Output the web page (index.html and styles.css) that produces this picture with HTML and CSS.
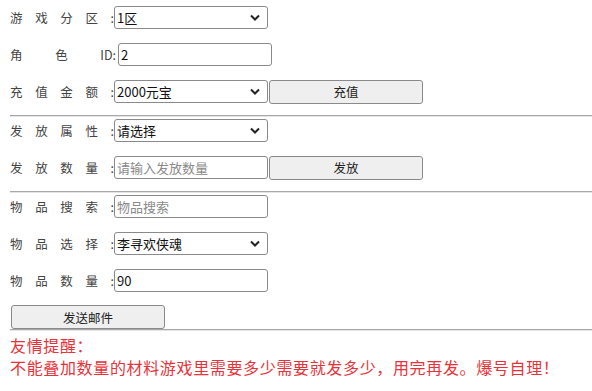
FILE: index.html
```html
<!DOCTYPE html>
<html lang="zh-CN">
<head>
<meta charset="utf-8">
<title>充值发放</title>
<link rel="stylesheet" href="styles.css">
</head>
<body>
<div class="page">
  <div class="row">
    <label class="lbl">游 戏 分 区 :</label>
    <div class="sel"><span class="val">1区</span><svg class="chev" width="10" height="7" viewBox="0 0 10 7"><path d="M1 1.5 L5 5.5 L9 1.5" fill="none" stroke="#222" stroke-width="2"/></svg></div>
  </div>
  <div class="row">
    <label class="lbl lbl-id">角 色 ID:</label>
    <div class="inp inp-id"><span class="val">2</span></div>
  </div>
  <div class="row">
    <label class="lbl">充 值 金 额 :</label>
    <div class="sel"><span class="val">2000元宝</span><svg class="chev" width="10" height="7" viewBox="0 0 10 7"><path d="M1 1.5 L5 5.5 L9 1.5" fill="none" stroke="#222" stroke-width="2"/></svg></div>
    <button class="btn">充值</button>
  </div>
  <hr class="sep">
  <div class="row">
    <label class="lbl">发 放 属 性 :</label>
    <div class="sel"><span class="val">请选择</span><svg class="chev" width="10" height="7" viewBox="0 0 10 7"><path d="M1 1.5 L5 5.5 L9 1.5" fill="none" stroke="#222" stroke-width="2"/></svg></div>
  </div>
  <div class="row">
    <label class="lbl">发 放 数 量 :</label>
    <div class="inp"><span class="ph">请输入发放数量</span></div>
    <button class="btn">发放</button>
  </div>
  <hr class="sep">
  <div class="row">
    <label class="lbl">物 品 搜 索 :</label>
    <div class="inp"><span class="ph">物品搜索</span></div>
  </div>
  <div class="row">
    <label class="lbl">物 品 选 择 :</label>
    <div class="sel"><span class="val">李寻欢侠魂</span><svg class="chev" width="10" height="7" viewBox="0 0 10 7"><path d="M1 1.5 L5 5.5 L9 1.5" fill="none" stroke="#222" stroke-width="2"/></svg></div>
  </div>
  <div class="row">
    <label class="lbl">物 品 数 量 :</label>
    <div class="inp"><span class="val">90</span></div>
  </div>
  <button class="btn btn-send">发送邮件</button>
  <hr class="sep sep-last">
  <div class="notice">
    <p>友情提醒：</p>
    <p>不能叠加数量的材料游戏里需要多少需要就发多少，用完再发。爆号自理！</p>
  </div>
</div>
</body>
</html>
```

FILE: styles.css
```css
html, body {
  margin: 0;
  padding: 0;
  background: #fff;
}
body {
  font-family: "Noto Sans CJK SC", "Liberation Sans", sans-serif;
  color: #222;
}
.page {
  padding: 6px 0 0 10px;
  display: flex;
  flex-direction: column;
  align-items: flex-start;
}
.row {
  display: flex;
  align-items: center;
  height: 23px;
}
.row + .row {
  margin-top: 14px;
}
.lbl {
  width: 104px;
  font-size: 12.5px;
  color: #444;
  text-align: justify;
  text-align-last: justify;
  white-space: nowrap;
  line-height: 23px;
}
.lbl-id {
  width: 106px;
  margin-right: 2px;
}
.sel, .inp {
  box-sizing: border-box;
  width: 154px;
  height: 23px;
  border: 1px solid #8a8a8a;
  border-radius: 3px;
  background: #fff;
  display: flex;
  align-items: center;
  padding: 0 2px;
  font-size: 13px;
}
.sel {
  justify-content: space-between;
  padding-right: 7px;
}
.val {
  color: #111;
  line-height: 1;
}
.ph {
  color: #8a8a8a;
  font-size: 13px;
  line-height: 1;
}
.chev {
  display: block;
}
.btn {
  box-sizing: border-box;
  width: 154px;
  height: 24px;
  margin-left: 1px;
  border: 1px solid #8a8a8a;
  border-radius: 3px;
  background: #efefef;
  font-family: "Noto Sans CJK SC", "Liberation Sans", sans-serif;
  font-size: 12.5px;
  color: #222;
  padding: 0;
}
.sep {
  align-self: stretch;
  margin: 12px 0 2px;
  height: 0;
  border: 0;
  border-top: 1px solid #a8a8a8;
  border-bottom: 1px solid #e4e4e4;
}
.btn-send {
  margin: 13px 0 0 1px;
}
.sep-last {
  margin: 0;
}
.notice {
  margin-top: 3px;
  color: #e8323a;
  font-size: 16px;
  line-height: 22px;
  letter-spacing: 0.65px;
}
.notice p {
  margin: 0;
  white-space: nowrap;
}
```
